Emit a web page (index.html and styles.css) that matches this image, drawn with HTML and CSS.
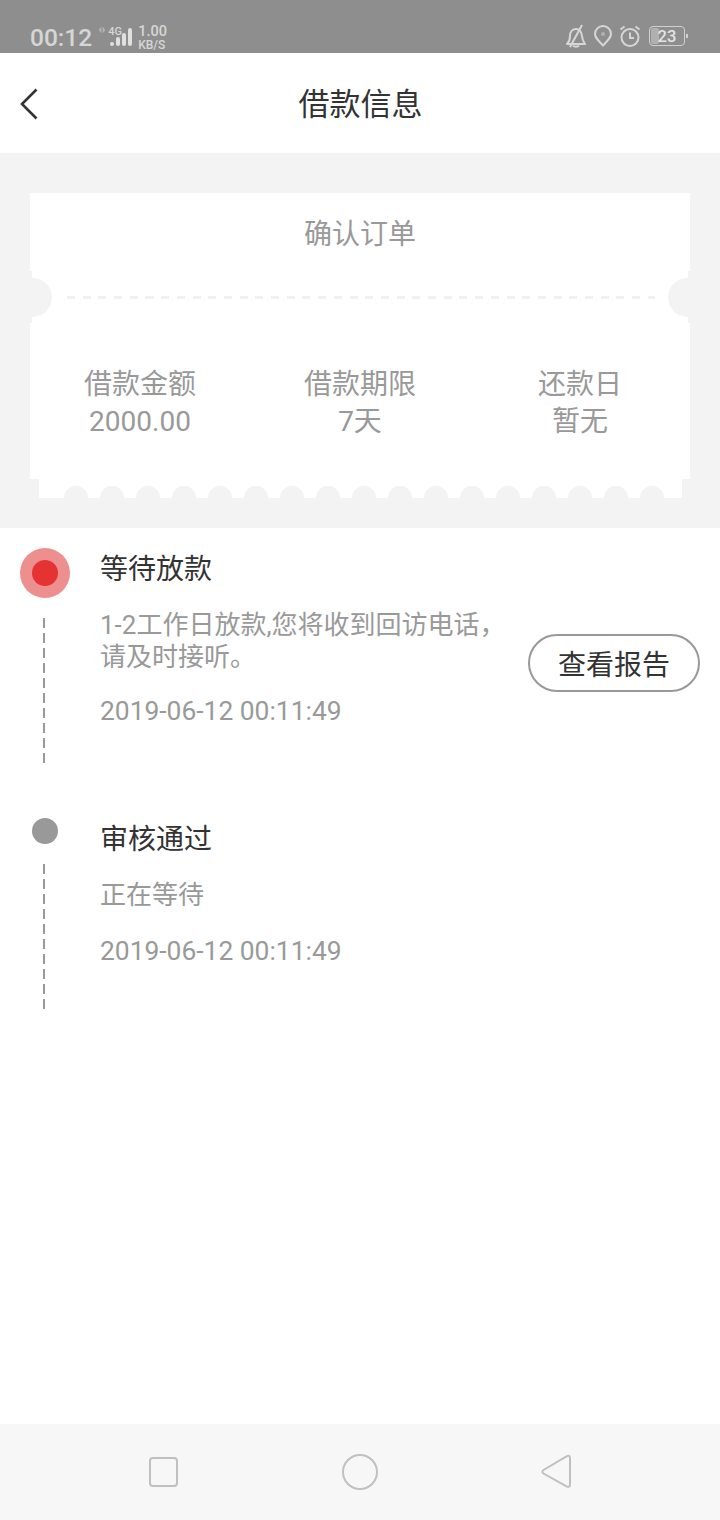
FILE: index.html
```html
<!DOCTYPE html>
<html lang="zh-CN">

<head>
    <meta charset="UTF-8">
    <meta name="viewport" content="width=device-width, initial-scale=1.0">
    <title>借款信息</title>
    <link rel="stylesheet" href="styles.css">
</head>

<body>
    <div class="page">

        <!-- Barra de estado -->
        <div class="status-bar">
            <span class="clock">00:12</span>
            <svg class="net-arrows" width="8" height="8" viewBox="0 0 10 10">
                <path d="M4.200 1v8L.8 5zM5.800 1v8l3.400-4z" fill="#b4b4b4"/>
            </svg>
            <div class="signal">
                <span class="signal-label">4G</span>
                <i class="bar bar-1"></i>
                <i class="bar bar-2"></i>
                <i class="bar bar-3"></i>
                <i class="bar bar-4"></i>
            </div>
            <div class="speed">
                <span>1.00</span>
                <span>KB/S</span>
            </div>
            <div class="status-icons">
                <svg width="22" height="24" viewBox="0 0 22 24" fill="none" stroke="#d6d6d6" stroke-width="2">
                    <path d="M2 20c2-2 3-4 3-8 0-4 2.500-7 6-7s5.500 3 6 7c.3 4 1.500 6 3 8z" stroke-linejoin="round"/>
                    <path d="M8 21.500c.5 1.500 5 1.500 6 0M5 23 17 1"/>
                </svg>
                <svg width="20" height="22" viewBox="0 0 20 22" fill="none">
                    <path d="M10 20.500C5 15.500 2 12.500 2 9a8 8 0 0 1 16 0c0 3.500-3 6.500-8 11.500z" stroke="#d6d6d6" stroke-width="2"/>
                    <circle cx="10" cy="9" r="2" fill="#b0b0b0"/>
                </svg>
                <svg width="22" height="22" viewBox="0 0 22 22" fill="none" stroke="#d6d6d6" stroke-width="2">
                    <circle cx="11" cy="12.500" r="8.500"/>
                    <path d="M11 7.500v5.500h4M1.500 4.500 5.500 1.500M20.500 4.500l-4-3"/>
                </svg>
                <div class="battery">
                    <div class="battery-level"></div>
                    <span class="battery-num">23</span>
                </div>
                <i class="battery-tip"></i>
            </div>
        </div>

        <!-- Cabecera -->
        <div class="nav-bar">
            <svg class="back" width="20" height="32" viewBox="0 0 20 32" fill="none">
                <path d="M17.500 1.500 3 16l14.500 14.500" stroke="#333" stroke-width="2.600"/>
            </svg>
            <h1 class="nav-title">借款信息</h1>
        </div>

        <!-- Ticket -->
        <div class="ticket-zone">
            <div class="ticket">
                <div class="ticket-head">确认订单</div>
                <div class="ticket-cut">
                    <i class="notch notch-left"></i>
                    <div class="cut-line"></div>
                    <i class="notch notch-right"></i>
                </div>
                <div class="ticket-info">
                    <div class="info-col">
                        <span>借款金额</span>
                        <span>2000.00</span>
                    </div>
                    <div class="info-col">
                        <span>借款期限</span>
                        <span>7天</span>
                    </div>
                    <div class="info-col">
                        <span>还款日</span>
                        <span>暂无</span>
                    </div>
                </div>
                <div class="ticket-foot">
                    <i class="bump"></i><i class="bump"></i><i class="bump"></i><i class="bump"></i>
                    <i class="bump"></i><i class="bump"></i><i class="bump"></i><i class="bump"></i>
                    <i class="bump"></i><i class="bump"></i><i class="bump"></i><i class="bump"></i>
                    <i class="bump"></i><i class="bump"></i><i class="bump"></i><i class="bump"></i>
                    <i class="bump"></i>
                </div>
            </div>
        </div>

        <!-- Pasos -->
        <div class="steps">
            <div class="step">
                <div class="rail">
                    <div class="dot-ring"><i class="dot dot-red"></i></div>
                    <div class="rail-line"></div>
                </div>
                <div class="step-body">
                    <div class="step-title">等待放款</div>
                    <div class="step-text">1-2工作日放款,您将收到回访电话，请及时接听。</div>
                    <div class="step-date">2019-06-12 00:11:49</div>
                </div>
                <button class="report-btn">查看报告</button>
            </div>

            <div class="step step-second">
                <div class="rail">
                    <i class="dot dot-grey"></i>
                    <div class="rail-line"></div>
                </div>
                <div class="step-body">
                    <div class="step-title">审核通过</div>
                    <div class="step-text">正在等待</div>
                    <div class="step-date">2019-06-12 00:11:49</div>
                </div>
            </div>
        </div>

        <!-- Barra de navegacion -->
        <div class="bottom-bar">
            <svg width="32" height="32" viewBox="0 0 32 32" fill="none">
                <rect x="2" y="2" width="27" height="28" rx="3" stroke="#c0c0c0" stroke-width="2"/>
            </svg>
            <svg width="38" height="38" viewBox="0 0 38 38" fill="none">
                <circle cx="19" cy="19" r="17" stroke="#c0c0c0" stroke-width="2"/>
            </svg>
            <svg width="32" height="38" viewBox="0 0 32 38" fill="none">
                <path d="M3.500 17 26.500 3.300Q30 1.500 30 5V31.500Q30 35 26.500 33.300L3.500 20.500Q1.200 18.700 3.500 17z" stroke="#c0c0c0" stroke-width="2"/>
            </svg>
        </div>

    </div>
</body>
</html>
```

FILE: styles.css
```css
* {
    box-sizing: border-box;
}

body {
    margin: 0;
    padding: 0;
    background: #fff;
    font-family: Roboto, "Noto Sans CJK SC", sans-serif;
}

.page {
    display: flex;
    flex-direction: column;
    width: 720px;
    height: 1520px;
    overflow: hidden;
}

/* Barra de estado */
.status-bar {
    display: flex;
    align-items: flex-end;
    height: 53px;
    padding: 0 32px 0 30px;
    background: #8e8e8e;
    color: #d6d6d6;
}

.clock {
    font-size: 24.500px;
    font-weight: 500;
    line-height: 29px;
    margin-bottom: 1px;
}

.net-arrows {
    margin: 0 0 19px 6px;
}

.signal {
    position: relative;
    display: flex;
    align-items: flex-end;
    gap: 2px;
    margin: 0 0 7px 4px;
}

.signal-label {
    position: absolute;
    top: -2px;
    left: -2px;
    font-size: 11px;
    font-weight: 500;
    line-height: 12px;
}

.bar {
    width: 4px;
    border-radius: 2px;
    background: #e0e0e0;
}

.bar-1 { height: 4px; }
.bar-2 { height: 9px; }
.bar-3 { height: 13px; }
.bar-4 { height: 18px; }

.speed {
    display: flex;
    flex-direction: column;
    margin: 0 0 2px 6px;
    font-size: 12px;
    font-weight: 500;
    line-height: 12px;
}

.speed span:first-child {
    font-size: 14.500px;
    line-height: 14px;
}

.status-icons {
    display: flex;
    align-items: center;
    margin: 0 0 5px auto;
    gap: 6px;
}

.battery {
    position: relative;
    width: 36px;
    height: 20px;
    margin-left: 2px;
    border: 1px solid #d0d0d0;
    border-radius: 4px;
    text-align: center;
}

.battery-level {
    position: absolute;
    top: 1px;
    left: 1px;
    width: 8px;
    height: 16px;
    border-radius: 2px;
    background: #b0b0b0;
}

.battery-num {
    position: relative;
    display: block;
    font-size: 16.500px;
    font-weight: 500;
    line-height: 20px;
    color: #e4e4e4;
}

.battery-tip {
    width: 2px;
    height: 4px;
    margin-left: -5px;
    background: #d0d0d0;
}

/* Cabecera */
.nav-bar {
    position: relative;
    height: 100px;
    background: #fff;
}

.back {
    position: absolute;
    top: 35px;
    left: 19px;
}

.nav-title {
    margin: 0;
    padding-left: 1px;
    font-size: 31px;
    font-weight: 400;
    line-height: 104px;
    text-align: center;
    color: #333;
}

/* Ticket */
.ticket-zone {
    height: 375px;
    padding: 40px 30px 30px;
    background: #f3f3f3;
}

.ticket {
    display: flex;
    flex-direction: column;
    height: 305px;
}

.ticket-head {
    height: 78px;
    background: #fff;
    font-size: 28px;
    line-height: 84px;
    text-align: center;
    color: #999;
}

.ticket-cut {
    position: relative;
    display: flex;
    align-items: center;
    height: 52px;
    margin: 0 2px;
    padding: 0 33px 0 35px;
    overflow: hidden;
    background: #fff;
}

.notch {
    position: absolute;
    top: 7px;
    width: 39px;
    height: 39px;
    border-radius: 50%;
    background: #f3f3f3;
}

.notch-left { left: -19px; }
.notch-right { right: -19px; }

.cut-line {
    width: 100%;
    height: 3px;
    margin-top: 1px;
    background: repeating-linear-gradient(to right, #f1f1f1 0, #f1f1f1 8px, transparent 8px, transparent 15.700px);
}

.ticket-info {
    display: grid;
    grid-template-columns: repeat(3, 1fr);
    height: 156px;
    padding-top: 43px;
    background: #fff;
}

.info-col {
    display: flex;
    flex-direction: column;
    align-items: center;
    font-size: 28px;
    line-height: 37px;
    color: #999;
}

.ticket-foot {
    display: flex;
    align-items: flex-start;
    gap: 12.500px;
    height: 19px;
    margin: 0 8px 0 9px;
    padding: 7px 0 0 25px;
    overflow: hidden;
    background: #fff;
}

.bump {
    flex: none;
    width: 23.500px;
    height: 23.500px;
    border-radius: 50%;
    background: #f3f3f3;
}

/* Pasos */
.steps {
    flex: 1;
    padding: 20px 20px 0;
    background: #fff;
}

.step {
    display: flex;
}

.step-second {
    margin-top: 55px;
}

.rail {
    display: flex;
    flex-direction: column;
    align-items: center;
    flex: none;
    width: 50px;
}

.dot-ring {
    display: flex;
    justify-content: center;
    align-items: center;
    width: 50px;
    height: 50px;
    border-radius: 50%;
    background: #ee8f8f;
}

.dot {
    display: block;
    width: 26px;
    height: 26px;
    border-radius: 50%;
}

.dot-red {
    background: #e53333;
}

.dot-grey {
    background: #999;
}

.rail-line {
    width: 2px;
    height: 145px;
    margin: 20px 2px 0 0;
    background: repeating-linear-gradient(to bottom, #999 0, #999 10px, transparent 10px, transparent 15px);
}

.step-body {
    width: 410px;
    margin-left: 30px;
}

.step-title {
    font-size: 28px;
    line-height: 44px;
    color: #333;
}

.step-text {
    margin-top: 17px;
    font-size: 26px;
    line-height: 32px;
    color: #999;
}

.step-date {
    margin-top: 22px;
    font-size: 26.400px;
    line-height: 32px;
    color: #999;
}

.step-second .step-date {
    margin-top: 24px;
}

.report-btn {
    width: 172px;
    height: 58px;
    margin: 86px 0 0 auto;
    padding: 0;
    border: 2px solid #999;
    border-radius: 29px;
    background: #fff;
    font-family: Roboto, "Noto Sans CJK SC", sans-serif;
    font-size: 28px;
    color: #333;
}

/* Barra de navegacion */
.bottom-bar {
    display: flex;
    justify-content: space-between;
    align-items: center;
    height: 96px;
    padding: 0 148px;
    background: #f7f7f7;
}
```
